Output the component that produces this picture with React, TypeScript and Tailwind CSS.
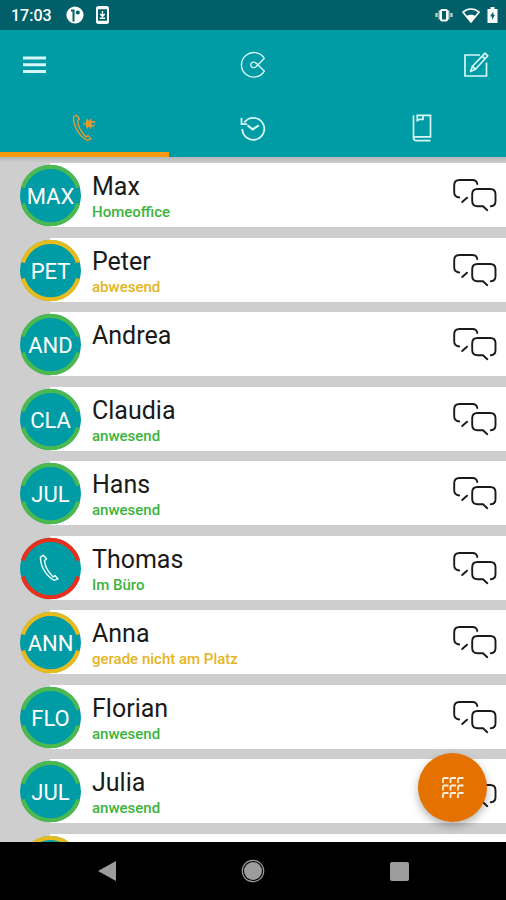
import type { ReactNode } from "react";

type Presence = "green" | "amber" | "red";

interface Contact {
  name: string;
  initials: string;
  ring: Presence;
  status?: string;
  onCall?: boolean;
}

const contacts: Contact[] = [
  { name: "Max", initials: "MAX", ring: "green", status: "Homeoffice" },
  { name: "Peter", initials: "PET", ring: "amber", status: "abwesend" },
  { name: "Andrea", initials: "AND", ring: "green" },
  { name: "Claudia", initials: "CLA", ring: "green", status: "anwesend" },
  { name: "Hans", initials: "JUL", ring: "green", status: "anwesend" },
  { name: "Thomas", initials: "", ring: "red", status: "Im Büro", onCall: true },
  { name: "Anna", initials: "ANN", ring: "amber", status: "gerade nicht am Platz" },
  { name: "Florian", initials: "FLO", ring: "green", status: "anwesend" },
  { name: "Julia", initials: "JUL", ring: "green", status: "anwesend" },
  { name: "", initials: "", ring: "amber" },
];

const ringColor: Record<Presence, string> = {
  green: "text-[#4cb950]",
  amber: "text-[#e6bb1e]",
  red: "text-[#e8301c]",
};

const statusColor: Record<Presence, string> = {
  green: "text-[#3cb43c]",
  amber: "text-[#e6b422]",
  red: "text-[#3cb43c]",
};

const handsetPath =
  "M1.500 3.200 4.300 1.200l3.200 3.500-2 2c.3 4.700 3.400 10.500 7.300 14.800l1.400 1.500 1.800-1.400 3 3.300-3.700 1.500C8.500 23 1.300 13.500 1.500 3.200Z";

function StatusBar() {
  return (
    <div className="flex h-[30px] shrink-0 items-center bg-[#005f68] pr-2 pl-[11px] text-white">
      <span className="pt-[2px] text-base leading-5 font-medium">17:03</span>
      <svg className="ml-[14px] h-[18px] w-[18px]" viewBox="0 0 18 18" aria-hidden="true">
        <circle cx="9" cy="9" r="8.6" fill="currentColor" />
        <path d="M7.500 15.500V4.500H5" stroke="#005f68" strokeWidth="2" fill="none" />
        <circle cx="11.800" cy="6.500" r="2" fill="#005f68" />
      </svg>
      <svg className="ml-3 h-[18px] w-[13px]" viewBox="0 0 13 18" aria-hidden="true">
        <rect x="1" y="1" width="11" height="16" rx="1.500" fill="none" stroke="currentColor" strokeWidth="2" />
        <path d="M1 2.500h11M1 15.500h11" stroke="currentColor" strokeWidth="1.500" />
        <path d="M6.500 5v5M4.200 8l2.300 2.500L8.800 8M3.800 12.300h5.400" stroke="currentColor" strokeWidth="1.400" fill="none" />
      </svg>
      <div className="ml-auto flex items-center">
        <svg className="h-4 w-[18px]" viewBox="0 0 18 16" aria-hidden="true">
          <path d="M5 3.500v9M13 3.500v9" stroke="#b5d3c9" strokeWidth="3" />
          <path d="M1.500 6v4M16.500 6v4" stroke="#b5d3c9" strokeWidth="2.400" />
          <rect x="6" y="3" width="6" height="10.500" rx="1" fill="#005f68" stroke="currentColor" strokeWidth="2" />
        </svg>
        <svg className="ml-[9px] h-4 w-[18px]" viewBox="0 0 18 16" aria-hidden="true">
          <path d="M9 15 1 5.200C5.400 1 12.600 1 17 5.200Z" fill="none" stroke="currentColor" strokeWidth="1.600" />
          <path d="M9 15.500 3.800 9.500c3-2.300 7.400-2.300 10.400 0Z" fill="currentColor" />
        </svg>
        <svg className="ml-[7px] h-4 w-[11px]" viewBox="0 0 11 16" aria-hidden="true">
          <path d="M3.500 0h4v2H10.500v14H.500V2h3Z" fill="currentColor" />
          <path d="M6.300 4.500 3 9.600h2v3.400l3-5.200H6.300Z" fill="#005f68" />
        </svg>
      </div>
    </div>
  );
}

function Tab({ label, active, children }: { label: string; active?: boolean; children: ReactNode }) {
  return (
    <button
      type="button"
      role="tab"
      aria-selected={!!active}
      aria-label={label}
      className={
        active
          ? "flex h-full items-center justify-center border-b-[5px] border-[#f7980d] pt-1 text-[#e49a2f]"
          : "flex h-full items-center justify-center border-b-[5px] border-transparent pt-1 text-[#d8f7f7]"
      }
    >
      {children}
    </button>
  );
}

function Header() {
  return (
    <header className="shrink-0 bg-[#009ca6] text-[#d8f7f7]">
      <div className="grid h-[69px] grid-cols-[1fr_28px_1fr] items-center pr-[17px] pl-[23px]">
        <button type="button" aria-label="Menü" className="w-[26px]">
          <svg className="h-[18px] w-[23px]" viewBox="0 0 23 18" aria-hidden="true">
            <path d="M0 2h23M0 8.700h23M0 15.500h23" stroke="currentColor" strokeWidth="3" />
          </svg>
        </button>
        <svg
          className="-ml-[2px] h-7 w-7"
          viewBox="0 0 28 28"
          fill="none"
          stroke="currentColor"
          strokeWidth="1.400"
          strokeLinejoin="round"
          aria-hidden="true"
        >
          <path d="M24.300 7.500A12.300 12.300 0 1 0 24.300 20.100L16.200 12.200C15 11.200 14 10.900 12.800 11.200c-2.800.9-2.700 4.800 0 5.400 1.300.2 2.300-.2 3.400-1.200Z" />
        </svg>
        <button type="button" aria-label="Bearbeiten" className="justify-self-end">
          <svg
            className="h-[26px] w-[26px]"
            viewBox="0 0 26 26"
            fill="none"
            stroke="currentColor"
            strokeWidth="1.700"
            aria-hidden="true"
          >
            <path d="M17 3H2v21h21.500V10.500" />
            <path d="m22 1.200 2.800 2.600L12.500 17.200l-5 2.300 1.800-5Z" strokeLinejoin="round" />
            <path d="m19.300 4.300 2.800 2.600M9.300 14.500l3.200 2.700" />
          </svg>
        </button>
      </div>
      <div role="tablist" className="grid h-[58px] grid-cols-3">
        <Tab label="Kontakte" active>
          <svg className="h-7 w-6" viewBox="0 0 24 28" fill="none" stroke="currentColor" aria-hidden="true">
            <path d={handsetPath} strokeWidth="1.400" strokeLinejoin="round" />
            <path d="M14 6.500h5.500v6.500H14z" fill="currentColor" stroke="none" />
            <path d="M11.500 9.700h3M15.300 5v9.500M18.500 5v9.500M19 7.700h4M19 11.700h3.500" strokeWidth="1.400" />
          </svg>
        </Tab>
        <Tab label="Verlauf">
          <svg
            className="h-[26px] w-[26px]"
            viewBox="0 0 26 26"
            fill="none"
            stroke="currentColor"
            strokeWidth="1.800"
            aria-hidden="true"
          >
            <path d="M4.300 7.500A11 11 0 1 1 2.300 14" />
            <path d="M1.500 3v6.100h5.700" />
            <path d="m7.500 10.300 5.300 4 6-4" strokeWidth="2.200" />
          </svg>
        </Tab>
        <Tab label="Telefonbuch">
          <svg
            className="h-7 w-5"
            viewBox="0 0 20 28"
            fill="none"
            stroke="currentColor"
            strokeWidth="1.700"
            aria-hidden="true"
          >
            <path d="M18.500 26.700H4.200A2.700 2.700 0 0 1 1.500 24V1.300M4.500 1.300h14v21.500H4.200c-1.500 0-2.700.7-2.700 2" />
            <path d="M5.300 1.500v5l2.200-1.200h3.500V1.500" />
          </svg>
        </Tab>
      </div>
    </header>
  );
}

function Avatar({ contact }: { contact: Contact }) {
  return (
    <div className="relative -ml-[30px] grid h-[61px] w-[61px] shrink-0 place-items-center rounded-full bg-[#009ca6]">
      <svg
        className={"absolute inset-0 h-full w-full overflow-visible " + ringColor[contact.ring]}
        viewBox="0 0 61 61"
        fill="none"
        stroke="currentColor"
        strokeWidth="4.200"
        aria-hidden="true"
      >
        <path d="M2.900 22.500a28.800 28.800 0 0 1 55.200 0M2.900 38.700a28.800 28.800 0 0 0 55.200 0" />
      </svg>
      {contact.onCall ? (
        <svg
          className="relative mr-1 h-7 w-5 text-[#e4fbfb]"
          viewBox="0 0 20 28"
          fill="none"
          stroke="currentColor"
          strokeWidth="1.500"
          strokeLinejoin="round"
          aria-hidden="true"
        >
          <path d={handsetPath} />
        </svg>
      ) : (
        <span className="relative pt-1 text-[22px] leading-6 text-white">{contact.initials}</span>
      )}
    </div>
  );
}

function ChatIcon() {
  return (
    <svg
      className="h-[34px] w-11"
      viewBox="0 0 44 34"
      fill="none"
      stroke="currentColor"
      strokeWidth="1.900"
      strokeLinecap="round"
      aria-hidden="true"
    >
      <path d="M24.300 6C23.800 3 22.500 2 19.500 2H6.500C3 2 1.200 3.800 1.200 7.300v7c0 3.200 1.500 4.700 5 5.200M9.200 24l4.800-4.300" />
      <path d="M37.800 28.200c3.200-.3 4.700-2 4.700-5v-7c0-3.500-1.800-5.200-5.300-5.200H24.500c-3.500 0-5.300 1.700-5.300 5.200v6.800c0 3.500 1.800 5.200 5.300 5.200H30l4.300 4" />
    </svg>
  );
}

function ContactRow({ contact }: { contact: Contact }) {
  return (
    <li className="odd:pb-[11px] even:pb-[10px]">
      <div className="ml-[50px] flex h-16 items-center bg-white pr-[9px]">
        <Avatar contact={contact} />
        <div className="ml-[11px] flex h-full min-w-0 flex-1 flex-col pt-[10px]">
          <span className="text-[25px] leading-7 text-[#1a1a1a]">{contact.name}</span>
          <span className={"truncate text-[15px] leading-[22px] font-medium " + statusColor[contact.ring]}>
            {contact.status}
          </span>
        </div>
        <button type="button" aria-label={"Chat mit " + contact.name} className="text-[#1a1a1a]">
          <ChatIcon />
        </button>
      </div>
    </li>
  );
}

function DialpadButton() {
  return (
    <button
      type="button"
      aria-label="Wähltastatur"
      className="absolute right-[19px] bottom-5 grid h-[69px] w-[69px] place-items-center rounded-full bg-[#e57200] text-[#fff0dc] shadow-[0_4px_8px_rgba(0,0,0,0.3)]"
    >
      <svg className="h-[22px] w-[22px]" viewBox="0 0 22 22" fill="none" stroke="currentColor" strokeWidth="1.800" aria-hidden="true">
        {[0, 7.5, 15].map((y) =>
          [0, 7.5, 15].map((x) => (
            <path key={x + "-" + y} d={`M${x + 1} ${y + 6}V${y + 2.5}q0-1.500 1.500-1.500H${x + 6.5}`} />
          )),
        )}
      </svg>
    </button>
  );
}

function NavigationBar() {
  return (
    <nav className="grid h-[58px] shrink-0 grid-cols-[1fr_80px_1fr] items-center bg-black text-[#9c9c9c]">
      <button type="button" aria-label="Zurück" className="flex justify-center">
        <svg className="h-5 w-[18px]" viewBox="0 0 18 20" aria-hidden="true">
          <path d="M18 0v20L0 10Z" fill="currentColor" />
        </svg>
      </button>
      <button type="button" aria-label="Startseite" className="flex justify-center">
        <svg className="h-6 w-6" viewBox="0 0 24 24" aria-hidden="true">
          <circle cx="12" cy="12" r="9" fill="currentColor" />
          <circle cx="12" cy="12" r="10.700" fill="none" stroke="currentColor" strokeWidth="1.200" />
        </svg>
      </button>
      <button type="button" aria-label="Übersicht" className="flex justify-center">
        <span className="h-[19px] w-[19px] rounded-xs bg-current" />
      </button>
    </nav>
  );
}

export default function App() {
  return (
    <div className="flex h-screen flex-col overflow-hidden bg-[#cecece] font-[Roboto,sans-serif]">
      <StatusBar />
      <Header />
      <main className="relative min-h-0 flex-1 overflow-hidden">
        <div className="h-[6px] bg-linear-to-b from-[#b4b8b8] to-[#cecece]" />
        <ul>
          {contacts.map((contact, index) => (
            <ContactRow key={index} contact={contact} />
          ))}
        </ul>
        <DialpadButton />
      </main>
      <NavigationBar />
    </div>
  );
}
